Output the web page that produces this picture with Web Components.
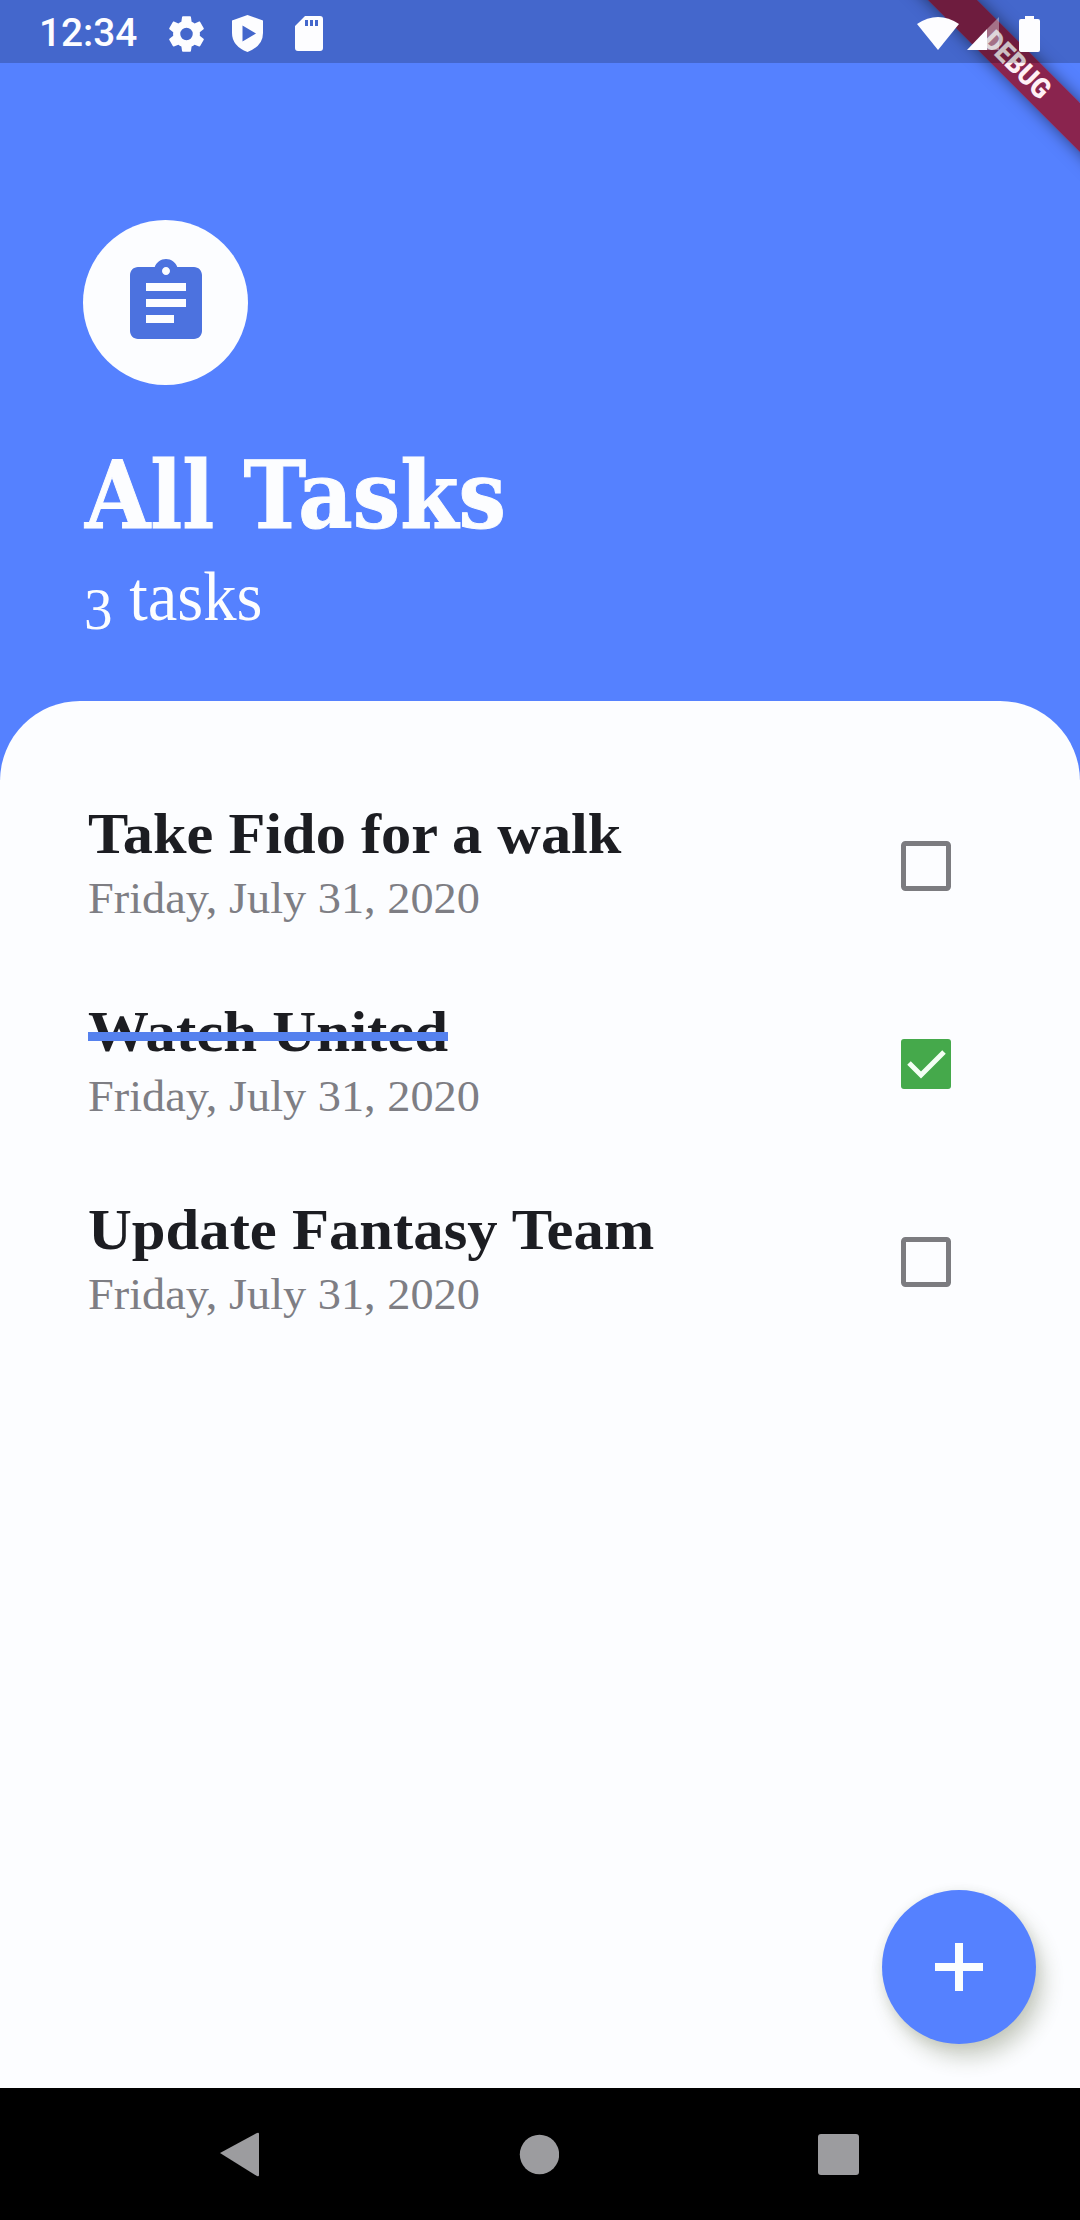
<!DOCTYPE html>
<html lang="en">
<head>
<meta charset="utf-8">
<title>All Tasks</title>
<style>
html,body{margin:0;padding:0}
body{width:1080px;height:2220px;overflow:hidden;font-family:"Liberation Serif",serif}
</style>
</head>
<body>
<task-app></task-app>
<script>
const define = (name, html, ready) => {
  const template = document.createElement('template');
  template.innerHTML = html;
  customElements.define(name, class extends HTMLElement {
    connectedCallback() {
      if (this.shadowRoot) return;
      this.attachShadow({mode: 'open'}).append(template.content.cloneNode(true));
      if (ready) ready(this, this.shadowRoot);
    }
  });
};

// One line of text, condensed or widened to the length in its "width" attribute.
define('fit-text', `
<style>
:host{display:block;white-space:nowrap}
span{display:inline-block;transform-origin:0 50%}
</style><span><slot></slot></span>`, (host, root) => {
  const span = root.querySelector('span');
  span.style.transform = `scaleX(${host.getAttribute('width') / span.offsetWidth})`;
});

define('status-bar', `
<style>
:host{display:flex;box-sizing:border-box;width:1080px;height:63px;padding:4px 40px 0 39px;align-items:center;
background:rgba(0,0,0,.2);color:#fdfdff;font:500 38px/63px Roboto,sans-serif}
svg{display:block;fill:currentColor;flex:none}
.left,.right{display:flex;align-items:center}
.left{gap:27px}
.right{margin-left:auto;gap:8px}
fit-text{width:103px}
</style>
<div class="left">
<fit-text width="98">12:34</fit-text>
<svg width="35" height="36" viewBox="2.2 2 19.6 20"><path d="M19.43 12.98c.04-.32.07-.64.07-.98s-.03-.66-.07-.98l2.11-1.65c.19-.15.24-.42.12-.64l-2-3.46c-.12-.22-.39-.3-.61-.22l-2.49 1c-.52-.4-1.08-.73-1.69-.98l-.38-2.65A.49.49 0 0 0 14 2h-4c-.25 0-.46.18-.49.42l-.38 2.65c-.61.25-1.17.59-1.69.98l-2.49-1c-.23-.09-.49 0-.61.22l-2 3.46c-.13.22-.07.49.12.64l2.11 1.65c-.04.32-.07.65-.07.98s.03.66.07.98l-2.11 1.65c-.19.15-.24.42-.12.64l2 3.46c.12.22.39.3.61.22l2.49-1c.52.4 1.08.73 1.69.98l.38 2.65c.03.24.24.42.49.42h4c.25 0 .46-.18.49-.42l.38-2.65c.61-.25 1.17-.59 1.69-.98l2.49 1c.23.09.49 0 .61-.22l2-3.46c.12-.22.07-.49-.12-.64zM12 15.5a3.5 3.5 0 1 1 0-7 3.5 3.5 0 0 1 0 7z"/></svg>
<svg width="33" height="37" viewBox="0 0 33 37"><path fill-rule="evenodd" d="M16.500 0 32 5.500V18q0 13-15.500 19Q1 31 1 18V5.500zM11.500 10.500v16L25 18.500z"/></svg>
<svg style="margin-left:4px" width="28" height="35" viewBox="0 0 28 35"><path fill-rule="evenodd" d="M10 0h15q3 0 3 3v29q0 3-3 3H3q-3 0-3-3V10zM10 4v6h3V4zm5 0v6h3V4zm5 0v6h3V4z"/></svg>
</div>
<div class="right">
<svg width="42" height="33" viewBox="0 0 42 33"><path d="M21 33 0 7Q21-7 42 7z"/></svg>
<svg width="36" height="36" viewBox="0 0 36 36"><path d="M0 34 20 13V34z"/><path d="M20 13 32 1V34H20z" fill-opacity=".38"/></svg>
<svg style="margin-left:8px" width="21" height="36" viewBox="0 0 21 36"><path d="M6 0h9v3h4q2 0 2 2v29q0 2-2 2H2q-2 0-2-2V5q0-2 2-2h4z"/></svg>
</div>`);

define('debug-banner', `
<style>
:host{display:flex;width:300px;height:35px;align-items:center;justify-content:center;transform:rotate(45deg);
background:rgba(160,0,10,.72);box-shadow:0 0 16px rgba(0,0,0,.5);color:#fff0f5;font:900 28px/34px Roboto,sans-serif}
fit-text{width:83px}
</style><fit-text width="83">DEBUG</fit-text>`);

define('task-header', `
<style>
:host{display:flex;flex-direction:column;box-sizing:border-box;height:780px;padding:220px 83px 0;background:#5581ff;color:#fcfdff}
.badge{display:flex;width:165px;height:165px;border-radius:50%;background:#fcfdff;align-items:center;justify-content:center;color:#4c72df}
svg{fill:currentColor}
h1{margin:55px 0 0 2px;font:700 94px/110px "DejaVu Serif",serif;-webkit-text-stroke:1px currentColor}
p{margin:7px 0 0 1px;font:400 70px/80px "Liberation Serif",serif}
p span{position:relative;top:9px;font-size:60px}
</style>
<div class="badge"><svg width="96" height="96" viewBox="0 0 24 24"><path d="M19 3h-4.180C14.400 1.840 13.300 1 12 1c-1.300 0-2.400.84-2.820 2H5c-1.100 0-2 .9-2 2v14c0 1.100.9 2 2 2h14c1.100 0 2-.9 2-2V5c0-1.100-.9-2-2-2zm-7 0c.55 0 1 .45 1 1s-.45 1-1 1-1-.45-1-1 .45-1 1-1zm2 14H7v-2h7v2zm3-4H7v-2h10v2zm0-4H7V7h10v2z"/></svg></div>
<h1><fit-text width="421">All Tasks</fit-text></h1>
<p><fit-text width="179"><span>3</span> tasks</fit-text></p>`);

define('check-box', `
<style>
:host{display:block;width:50px;height:50px}
svg{display:block}
.on{display:none}
:host([checked]) .on{display:block}
:host([checked]) .off{display:none}
</style>
<svg class="off" width="50" height="50"><rect x="2.500" y="2.500" width="45" height="45" rx="2" fill="none" stroke="#7c7c80" stroke-width="5"/></svg>
<svg class="on" width="50" height="50"><rect width="50" height="50" rx="3" fill="#45a94b"/><path d="M8 24 20 36 43 13" fill="none" stroke="#f4fff4" stroke-width="5"/></svg>`);

define('task-row', `
<style>
:host{display:flex;height:198px;padding:0 129px 0 88px;justify-content:space-between;align-items:flex-start}
.title{position:relative;width:max-content;font:700 58px/66px "Liberation Serif",serif;color:#1c1d22}
.date{margin-top:5px;font:400 45px/52px "Liberation Serif",serif;color:#7e7e84}
.strike{position:absolute;left:0;top:33px;height:9px;display:none;background:#5581ee}
:host([done]) .strike{display:block}
check-box{margin-top:40px}
</style>
<div><div class="title"></div><div class="date"><fit-text width="392">Friday, July 31, 2020</fit-text></div></div>
<check-box></check-box>`, (host, root) => {
  const width = host.getAttribute('width');
  const text = document.createElement('fit-text');
  text.setAttribute('width', width);
  text.textContent = host.getAttribute('label');
  const strike = document.createElement('div');
  strike.className = 'strike';
  strike.style.width = width + 'px';
  root.querySelector('.title').append(text, strike);
  root.querySelector('check-box').toggleAttribute('checked', host.hasAttribute('done'));
});

define('task-sheet', `
<style>:host{display:block;box-sizing:border-box;height:1387px;margin-top:-79px;padding-top:100px;border-radius:80px 80px 0 0;background:#fcfdff;position:relative}</style>
<slot></slot>`);

define('add-button', `
<style>
:host{display:flex;width:154px;height:154px;border-radius:50%;background:#5581ff;align-items:center;justify-content:center;
box-shadow:8px 14px 20px rgba(60,70,30,.24),0 2px 12px rgba(60,70,30,.1)}
</style><svg width="48" height="48"><path d="M24 0V48M0 24H48" stroke="#fafdff" stroke-width="8"/></svg>`);

define('nav-bar', `
<style>
:host{display:flex;box-sizing:border-box;height:132px;padding:44px 221px 0 220px;justify-content:space-between;align-items:flex-start;background:#000}
svg{fill:#9c9c9f;display:block}
</style>
<svg width="40" height="46"><path d="M0 21 37 1q2-1 2 1V43q0 2-2 1z"/></svg>
<svg width="40" height="44"><circle cx="20.500" cy="22.500" r="19.700"/></svg>
<svg width="42" height="44"><rect x="1" y="2" width="41" height="41" rx="3"/></svg>`);

define('task-app', `
<style>
:host{display:flex;flex-direction:column;position:relative;width:1080px;height:2220px;overflow:hidden;background:#fcfdff}
status-bar{position:absolute;left:0;top:0}
debug-banner{position:absolute;left:867px;top:47px}
add-button{position:absolute;left:882px;top:1890px}
</style>
<task-header></task-header>
<task-sheet>
<task-row label="Take Fido for a walk" width="533"></task-row>
<task-row label="Watch United" width="360" done></task-row>
<task-row label="Update Fantasy Team" width="566"></task-row>
</task-sheet>
<nav-bar></nav-bar>
<debug-banner></debug-banner>
<status-bar></status-bar>
<add-button></add-button>`);
</script>
</body>
</html>
